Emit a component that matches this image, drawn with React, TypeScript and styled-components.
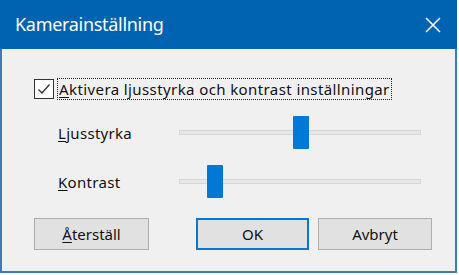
import React from "react";
import styled, { createGlobalStyle } from "styled-components";

const GlobalStyle = createGlobalStyle`
  html, body {
    margin: 0;
    padding: 0;
    background: #ffffff;
  }
  body {
    font-family: "Noto Sans", "Open Sans", sans-serif;
    color: #000;
  }
`;

const Window = styled.div`
  width: 457px;
  height: 273px;
  box-sizing: border-box;
  border: 2px solid #3d7ab8;
  border-top: none;
  display: flex;
  flex-direction: column;
  background: #f0f0f0;
`;

const TitleBar = styled.div`
  height: 49px;
  margin: 0 -2px;
  padding: 0 16px 0 15px;
  background: #0063b1;
  color: #ffffff;
  display: flex;
  align-items: center;
  justify-content: space-between;
  font-size: 18px;
`;

const Title = styled.span`
  letter-spacing: -0.3px;
  margin-top: -1px;
`;

const Content = styled.div`
  flex: 1;
  display: flex;
  flex-direction: column;
  padding-top: 29px;
  font-size: 15px;
  color: #111;
`;

const CheckRow = styled.div`
  display: flex;
  align-items: center;
  height: 22px;
  padding-left: 32px;
`;

const Box = styled.span`
  width: 20px;
  height: 20px;
  box-sizing: border-box;
  border: 1px solid #333333;
  background: #ffffff;
  display: flex;
  align-items: center;
  justify-content: center;
  margin-right: 3px;
`;

const FocusLabel = styled.span`
  height: 22px;
  box-sizing: border-box;
  border: 1px dotted #222;
  display: flex;
  align-items: center;
  padding: 0 1px;
  letter-spacing: 0.4px;
`;

const Key = styled.u`
  text-decoration-thickness: 1px;
  text-underline-offset: 2px;
`;

const SliderRow = styled.div<{ $top: number }>`
  display: flex;
  align-items: center;
  height: 33px;
  margin-top: ${({ $top }) => $top}px;
  padding-left: 56px;
`;

const SliderLabel = styled.span`
  width: 121px;
  letter-spacing: 0.3px;
`;

const Track = styled.div`
  position: relative;
  width: 242px;
  height: 5px;
  box-sizing: border-box;
  background: #e7e7e7;
  border: 1px solid #d6d6d6;
`;

const Thumb = styled.div`
  position: absolute;
  top: -15px;
  width: 16px;
  height: 33px;
  background: #0078d7;
  border-radius: 1px;
`;

const ButtonRow = styled.div`
  display: flex;
  align-items: center;
  margin-top: 20px;
  padding: 0 23px 0 32px;
`;

const Button = styled.button<{ $primary?: boolean; $w: number }>`
  width: ${({ $w }) => $w}px;
  height: 32px;
  box-sizing: border-box;
  background: #e1e1e1;
  border: ${({ $primary }) => ($primary ? "2px solid #0078d7" : "1px solid #adadad")};
  font-family: inherit;
  font-size: 15px;
  color: #111;
  padding: 0;
`;

const Right = styled.div`
  margin-left: auto;
  display: flex;
  gap: 9px;
`;

export default function App() {
  return (
    <>
      <GlobalStyle />
      <Window>
        <TitleBar>
          <Title>Kamerainställning</Title>
          <svg width="16" height="16" viewBox="0 0 16 16">
            <path d="M1 1 L15 15 M15 1 L1 15" stroke="#fff" strokeWidth="1.6" />
          </svg>
        </TitleBar>
        <Content>
          <CheckRow>
            <Box>
              <svg width="16" height="16" viewBox="0 0 16 16">
                <path d="M2.5 8.5 L6 12 L13.5 3.5" stroke="#333" strokeWidth="1.3" fill="none" />
              </svg>
            </Box>
            <FocusLabel>
              <span>
                <Key>A</Key>ktivera ljusstyrka och kontrast inställningar
              </span>
            </FocusLabel>
          </CheckRow>
          <SliderRow $top={16}>
            <SliderLabel>
              <Key>L</Key>jusstyrka
            </SliderLabel>
            <Track>
              <Thumb style={{ left: 113 }} />
            </Track>
          </SliderRow>
          <SliderRow $top={16}>
            <SliderLabel>
              <Key>K</Key>ontrast
            </SliderLabel>
            <Track>
              <Thumb style={{ left: 27 }} />
            </Track>
          </SliderRow>
          <ButtonRow>
            <Button $w={115}>
              <Key>Å</Key>terställ
            </Button>
            <Right>
              <Button $primary $w={113}>OK</Button>
              <Button $w={114}>Avbryt</Button>
            </Right>
          </ButtonRow>
        </Content>
      </Window>
    </>
  );
}
